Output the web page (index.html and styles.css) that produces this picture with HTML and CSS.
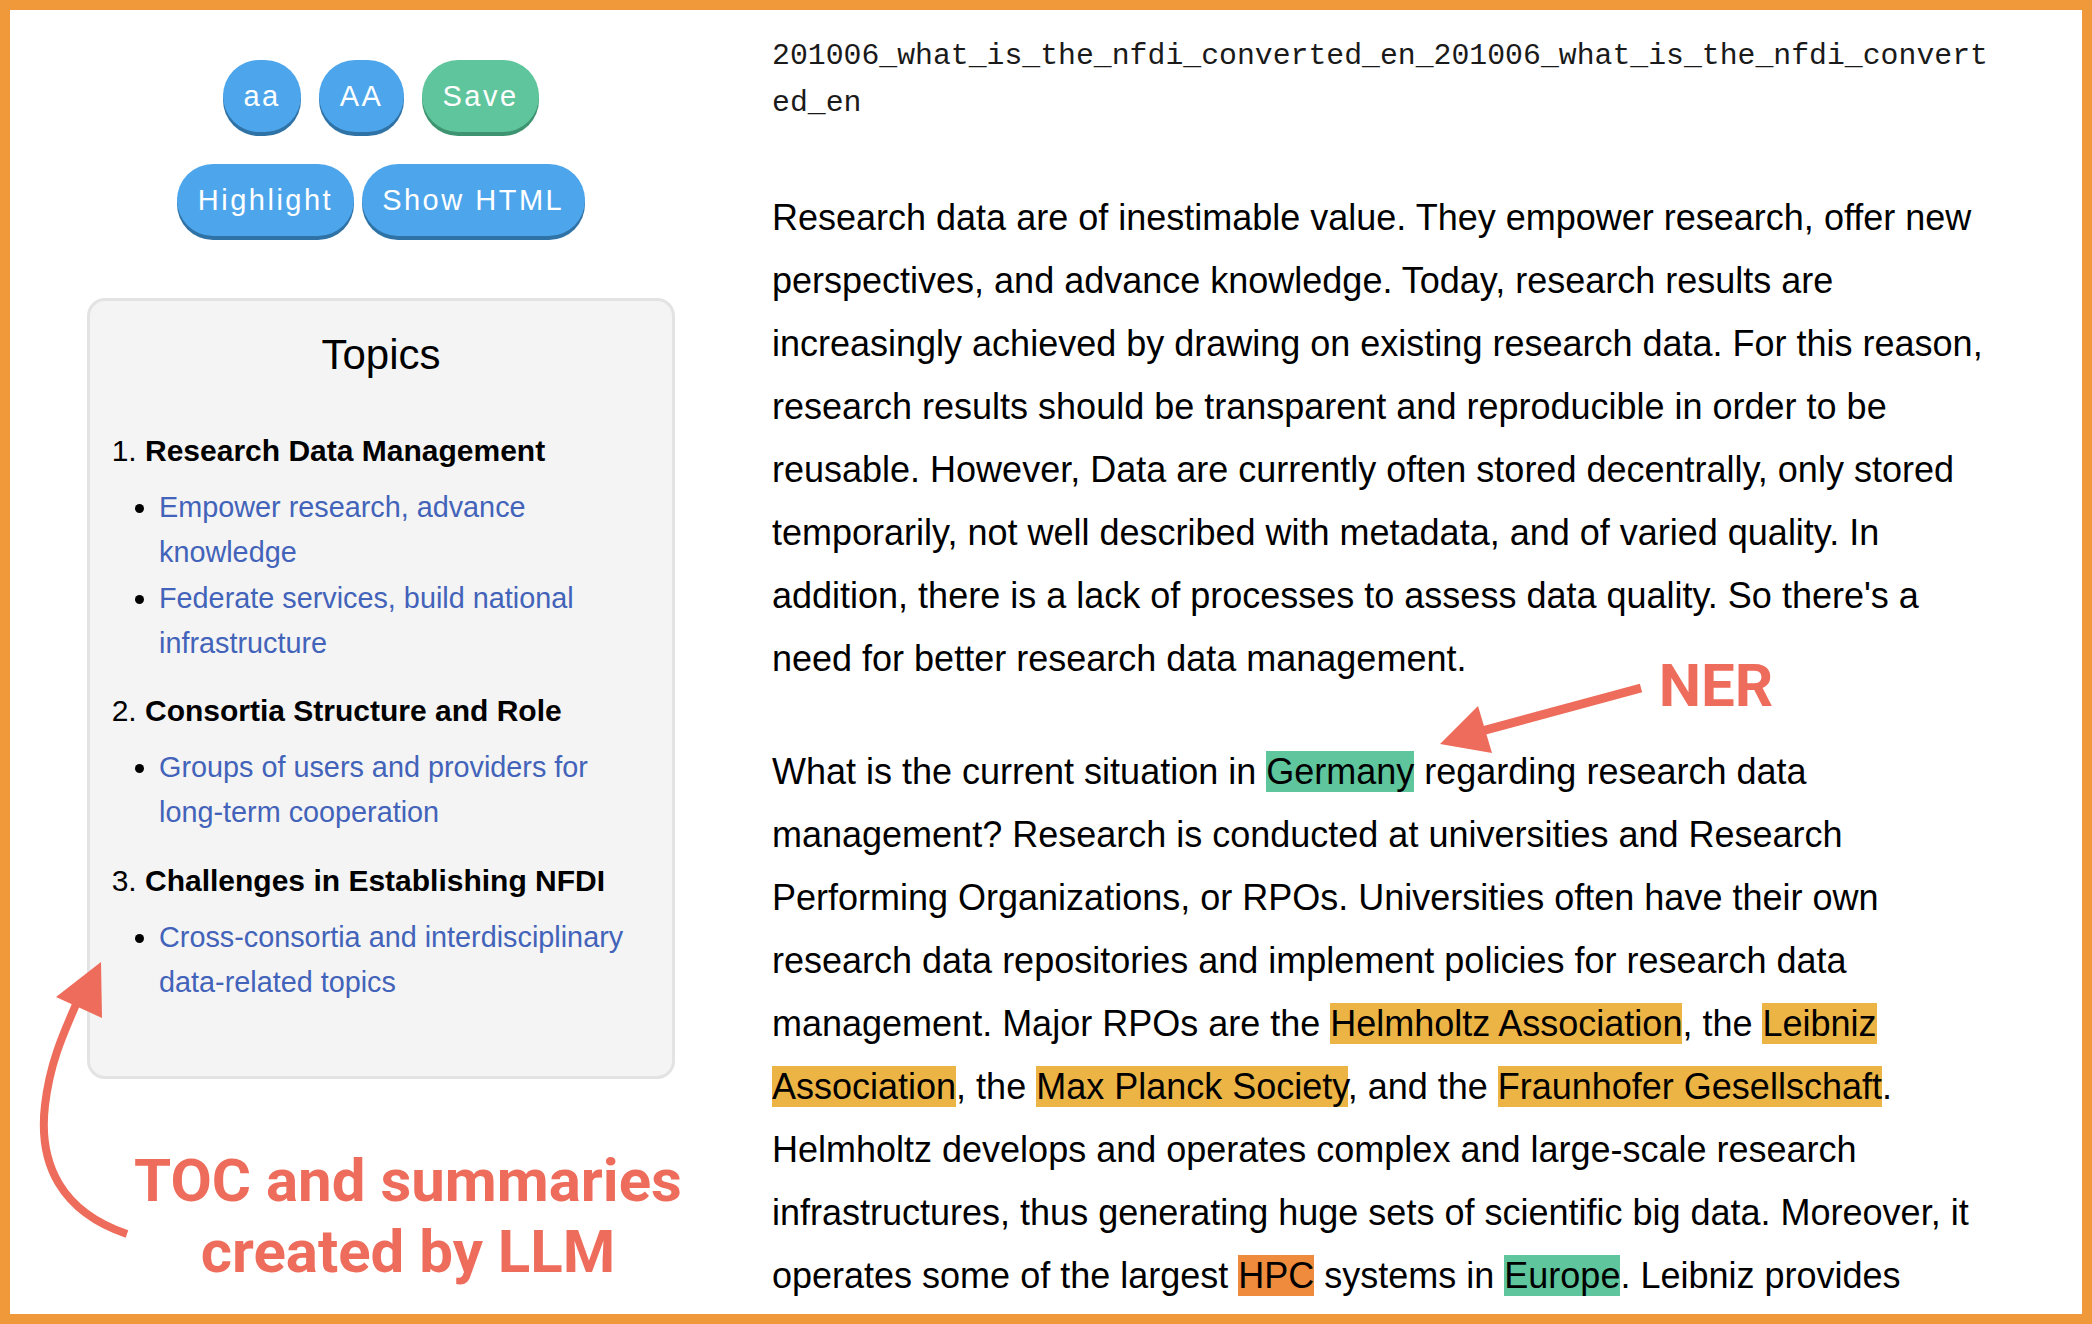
FILE: index.html
```html
<!DOCTYPE html>
<html lang="en">
<head>
<meta charset="utf-8">
<title>NFDI reader</title>
<link rel="stylesheet" href="styles.css">
</head>
<body>
<div class="frame">
  <aside class="sidebar">
    <div class="btn-row btn-row-top">
      <button class="btn">aa</button>
      <button class="btn">AA</button>
      <button class="btn btn-green">Save</button>
    </div>
    <div class="btn-row btn-row-bottom">
      <button class="btn">Highlight</button>
      <button class="btn">Show HTML</button>
    </div>
    <nav class="toc">
      <h2 class="toc-title">Topics</h2>
      <ol class="toc-list">
        <li><strong>Research Data Management</strong>
          <ul>
            <li><a href="#">Empower research, advance knowledge</a></li>
            <li><a href="#">Federate services, build national infrastructure</a></li>
          </ul>
        </li>
        <li><strong>Consortia Structure and Role</strong>
          <ul>
            <li><a href="#">Groups of users and providers for long-term cooperation</a></li>
          </ul>
        </li>
        <li><strong>Challenges in Establishing NFDI</strong>
          <ul>
            <li><a href="#">Cross-consortia and interdisciplinary data-related topics</a></li>
          </ul>
        </li>
      </ol>
    </nav>
  </aside>
  <main class="content">
    <h1 class="doc-title">201006_what_is_the_nfdi_converted_en_201006_what_is_the_nfdi_converted_en</h1>
    <p class="para">Research data are of inestimable value. They empower research, offer new perspectives, and advance knowledge. Today, research results are increasingly achieved by drawing on existing research data. For this reason, research results should be transparent and reproducible in order to be reusable. However, Data are currently often stored decentrally, only stored temporarily, not well described with metadata, and of varied quality. In addition, there is a lack of processes to assess data quality. So there's a need for better research data management.</p>
    <p class="para">What is the current situation in <span class="ent ent-loc">Germany</span> regarding research data management? Research is conducted at universities and Research Performing Organizations, or RPOs. Universities often have their own research data repositories and implement policies for research data management. Major RPOs are the <span class="ent ent-org">Helmholtz Association</span>, the <span class="ent ent-org">Leibniz Association</span>, the <span class="ent ent-org">Max Planck Society</span>, and the <span class="ent ent-org">Fraunhofer Gesellschaft</span>. Helmholtz develops and operates complex and large-scale research infrastructures, thus generating huge sets of scientific big data. Moreover, it operates some of the largest <span class="ent ent-misc">HPC</span> systems in <span class="ent ent-loc">Europe</span>. Leibniz provides</p>
  </main>

  <svg class="arrows" width="2092" height="1324" viewBox="0 0 2092 1324" xmlns="http://www.w3.org/2000/svg">
    <line x1="1641" y1="688" x2="1482" y2="731" stroke="#ee6c5b" stroke-width="9" stroke-linecap="butt"/>
    <polygon points="1440,744 1478,706 1492,753" fill="#ee6c5b"/>
    <path d="M127 1234 C 62 1212, 38 1165, 45 1105 C 50 1062, 64 1032, 78 1000" fill="none" stroke="#ee6c5b" stroke-width="8"/>
    <polygon points="101,962 56,997 102,1018" fill="#ee6c5b"/>
  </svg>
  <div class="note note-ner">NER</div>
  <div class="note note-toc">TOC and summaries<br>created by LLM</div>
</div>
</body>
</html>
```

FILE: styles.css
```css
html, body {
  margin: 0;
  padding: 0;
  background: #ffffff;
}

.frame {
  position: relative;
  box-sizing: border-box;
  width: 2092px;
  height: 1324px;
  border: 10px solid #f0993a;
  background: #ffffff;
  overflow: hidden;
  display: flex;
  align-items: flex-start;
  font-family: "Liberation Sans", Arial, Helvetica, sans-serif;
}

/* ---------- sidebar ---------- */
.sidebar {
  flex: none;
  width: 742px;
  padding-top: 50px;
  display: flex;
  flex-direction: column;
  align-items: center;
}

.btn-row {
  display: flex;
  justify-content: center;
}

.btn-row-top {
  gap: 18px;
}

.btn-row-bottom {
  gap: 8px;
  margin-top: 32px;
}

.btn {
  height: 72px;
  line-height: 72px;
  padding: 0 20.5px;
  border: none;
  border-radius: 40px;
  background: #4da6ec;
  box-shadow: 0 4px 0 #2f72a5;
  color: #ffffff;
  font-family: "Liberation Sans", Arial, Helvetica, sans-serif;
  font-size: 29px;
  letter-spacing: 2.5px;
  cursor: pointer;
}

.btn-green {
  background: #5fc59d;
  box-shadow: 0 4px 0 #3e9470;
}

.toc {
  box-sizing: border-box;
  width: 588px;
  margin-top: 62px;
  padding: 30px 26px 49px 26px;
  background: #f4f4f4;
  border: 3px solid #e3e3e3;
  border-radius: 18px;
}

.toc-title {
  margin: 0;
  text-align: center;
  font-size: 42px;
  line-height: 48px;
  font-weight: normal;
  color: #000000;
}

.toc-list {
  margin: 49px 0 0;
  padding-left: 29px;
  font-size: 30px;
  line-height: 45px;
  color: #000000;
}

.toc-list strong {
  font-weight: bold;
}

.toc-list ul {
  margin: 12px 0 22px;
  padding-left: 14px;
  list-style: disc;
}

.toc-list ul li {
  font-size: 28.8px;
  line-height: 45.3px;
}

.toc-list a {
  color: #4263b9;
  text-decoration: none;
}

/* ---------- main content ---------- */
.content {
  flex: none;
  width: 1225px;
  padding: 23px 0 0 20px;
  color: #000000;
}

.doc-title {
  margin: 0 0 59px;
  font-family: "Liberation Mono", "Courier New", monospace;
  font-size: 29.8px;
  line-height: 47px;
  font-weight: normal;
  color: #1a1a1a;
  word-break: break-all;
}

.para {
  margin: 0 0 50px;
  font-size: 36px;
  line-height: 63px;
}

.ent-loc {
  background: #5ec59c;
}

.ent-org {
  background: #ecb445;
}

.ent-misc {
  background: #ef8b3c;
}

/* ---------- annotations (overlay) ---------- */
.arrows {
  position: absolute;
  left: -10px;
  top: -10px;
  pointer-events: none;
}

.note {
  position: absolute;
  text-align: center;
  font-family: Roboto, "Noto Sans", sans-serif;
  font-weight: 700;
  font-size: 60px;
  line-height: 71px;
  color: #ee6c5b;
  pointer-events: none;
}

.note-ner {
  left: 1556px;
  top: 640px;
  width: 300px;
}

.note-toc {
  left: 98px;
  top: 1135px;
  width: 600px;
}
```
